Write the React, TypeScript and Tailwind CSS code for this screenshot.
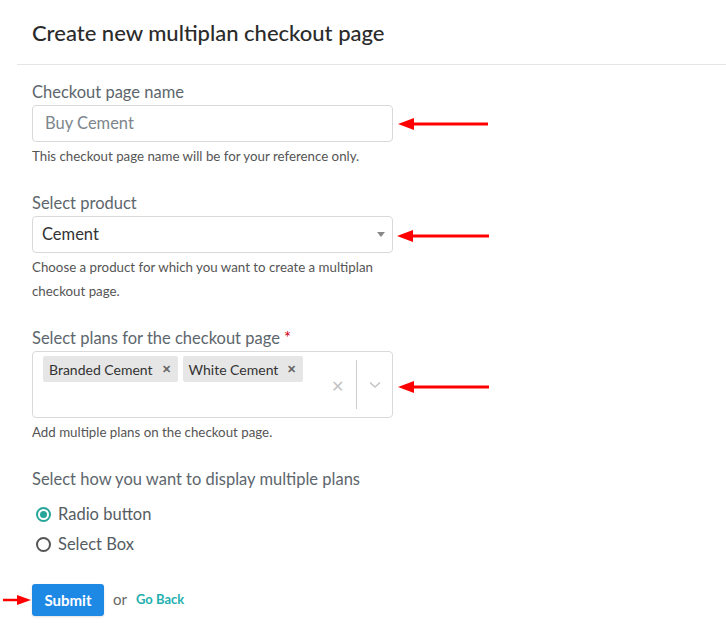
import React from "react";

function Arrow({ width = 90 }: { width?: number }) {
  return (
    <svg width={width} height="14" viewBox={`0 0 ${width} 14`} className="shrink-0">
      <polygon points="0,7 16,1 16,13" fill="#ff0000" />
      <line x1="14" y1="7" x2={width} y2="7" stroke="#ff0000" strokeWidth="3" />
    </svg>
  );
}

function ArrowRight() {
  return (
    <svg width="28" height="12" viewBox="0 0 28 12" className="shrink-0">
      <line x1="0" y1="6" x2="16" y2="6" stroke="#ff0000" strokeWidth="2.5" />
      <polygon points="28,6 14,1 14,11" fill="#ff0000" />
    </svg>
  );
}

function Chip({ label }: { label: string }) {
  return (
    <div className="flex items-center h-[26px] bg-[#e6e6e6] rounded-[2px] pl-[6px] pr-[7px] gap-[9px]">
      <span className="text-[14px] text-[#333]">{label}</span>
      <span className="text-[11px] text-[#666] font-bold">✕</span>
    </div>
  );
}

export default function App() {
  return (
    <div className="min-h-screen bg-white font-['Lato',sans-serif]">
      <div className="pl-[32px] pt-[20px] pb-[18px]">
        <h1 className="text-[22px] leading-[26px] text-[#2b2b2b] font-medium">
          Create new multiplan checkout page
        </h1>
      </div>
      <div className="ml-[17px] h-px bg-[#e5e5e5]" />

      <div className="pl-[32px] pt-[17px]">
        {/* Checkout page name */}
        <div className="text-[16.5px] leading-[20px] text-[#5d666d]">Checkout page name</div>
        <div className="flex items-center mt-[3px]">
          <div className="w-[361px] h-[37px] border border-[#d9d9d9] rounded-[4px] flex items-center pl-[12px]">
            <span className="text-[16.5px] text-[#7d868c]">Buy Cement</span>
          </div>
          <div className="ml-[5px]">
            <Arrow width={90} />
          </div>
        </div>
        <div className="text-[13.3px] leading-[18px] text-[#555] mt-[5px]">
          This checkout page name will be for your reference only.
        </div>

        {/* Select product */}
        <div className="text-[16.5px] leading-[20px] text-[#5d666d] mt-[28px]">Select product</div>
        <div className="flex items-center mt-[3px]">
          <div className="w-[361px] h-[37px] border border-[#d9d9d9] rounded-[4px] flex items-center justify-between pl-[9px] pr-[7px]">
            <span className="text-[16.5px] text-[#333]">Cement</span>
            <svg width="8" height="5" viewBox="0 0 8 5">
              <polygon points="0,0 8,0 4,5" fill="#888" />
            </svg>
          </div>
          <div className="ml-[4px] mt-[3px]">
            <Arrow width={92} />
          </div>
        </div>
        <div className="text-[13.3px] leading-[24px] text-[#555] mt-[2px] w-[361px]">
          Choose a product for which you want to create a multiplan checkout page.
        </div>

        {/* Select plans */}
        <div className="text-[16.5px] leading-[20px] text-[#5d666d] mt-[25px]">
          Select plans for the checkout page <span className="text-[#d0021b]">*</span>
        </div>
        <div className="flex items-center mt-[3px]">
          <div className="w-[361px] h-[67px] border border-[#d9d9d9] rounded-[4px] flex pl-[10px] pr-[8px]">
            <div className="flex-1 flex items-start gap-[5px] pt-[4px]">
              <Chip label="Branded Cement" />
              <Chip label="White Cement" />
            </div>
            <div className="flex items-center">
              <span className="text-[16px] text-[#c4c4c4] mr-[12px] mt-[2px]">✕</span>
              <div className="w-px h-[49px] bg-[#ccc]" />
              <svg width="12" height="8" viewBox="0 0 12 8" className="ml-[12px] mr-[3px]">
                <polyline points="1,1.5 6,6 11,1.5" fill="none" stroke="#c4c4c4" strokeWidth="1.6" />
              </svg>
            </div>
          </div>
          <div className="ml-[5px] mt-[4px]">
            <Arrow width={91} />
          </div>
        </div>
        <div className="text-[13.3px] leading-[18px] text-[#555] mt-[5px]">
          Add multiple plans on the checkout page.
        </div>

        {/* Display type */}
        <div className="text-[16.5px] leading-[20px] text-[#5d666d] mt-[28px]">
          Select how you want to display multiple plans
        </div>
        <div className="flex flex-col gap-[10px] mt-[15px] pl-[4px]">
          <label className="flex items-center gap-[7px]">
            <span className="w-[15px] h-[15px] rounded-full border-2 border-[#26a69a] flex items-center justify-center">
              <span className="w-[7px] h-[7px] rounded-full bg-[#26a69a]" />
            </span>
            <span className="text-[16.5px] leading-[20px] text-[#555d63]">Radio button</span>
          </label>
          <label className="flex items-center gap-[7px]">
            <span className="w-[15px] h-[15px] rounded-full border-2 border-[#555]" />
            <span className="text-[16.5px] leading-[20px] text-[#555d63]">Select Box</span>
          </label>
        </div>
      </div>

      {/* Actions */}
      <div className="flex items-center pl-[3px] mt-[30px]">
        <ArrowRight />
        <button className="ml-[1px] w-[72px] h-[32px] bg-[#1e88e5] rounded-[3px] text-white text-[15px] font-bold shadow-sm">
          Submit
        </button>
        <span className="ml-[9px] text-[15px] text-[#666] mb-[2px]">or</span>
        <a className="ml-[9px] text-[13px] font-bold text-[#1fb0b0]">Go Back</a>
      </div>
    </div>
  );
}
